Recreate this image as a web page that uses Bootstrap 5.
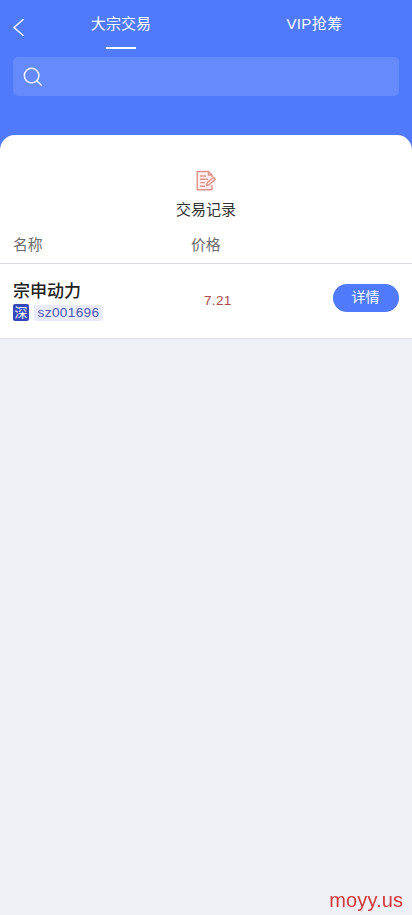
<!DOCTYPE html>
<html lang="zh-CN">
<head>
<meta charset="utf-8">
<meta name="viewport" content="width=device-width, initial-scale=1">
<title>大宗交易</title>
<link href="https://cdn.jsdelivr.net/npm/bootstrap@5.3.0/dist/css/bootstrap.min.css" rel="stylesheet">
<style>
body{font-family:"Liberation Sans","Noto Sans CJK SC",sans-serif;background:#eff1f6;font-size:15px;line-height:20px;color:#323233}
svg{display:block}
.hero{background:#507af9;height:150px}
.topbar{height:57px}
.back-btn{width:24px;padding:18px 0 0 12px}
.tab-item{color:#fff;padding-top:14px;height:49px;letter-spacing:.1px}
.tab-item.vip{letter-spacing:.4px;padding-right:1px}
.tab-line{width:30px;height:2px;background:#fff;margin-top:auto}
.search-box{height:39px;margin:0 13px;padding-left:10px;background:#658afb;border-radius:5px}
.panel{margin-top:-15px;border-radius:15px 15px 0 0;height:204px;border-bottom:1px solid #dcdde1}
.record{height:94px;padding-top:35px}
.record-title{margin-top:8px;font-size:15px;color:#323232}
.head-row{height:35px;padding:6px 13px 0;font-size:14.8px;color:#6b6b6b;border-bottom:1px solid #dcdde1}
.name-col{width:178px}
.stock-row{padding:17px 13px 0}
.stock-name{font-size:17px;line-height:22px;font-weight:500;color:#222}
.tags{gap:5px;padding-top:1px}
.market-tag{width:16px;height:17px;background:#3548ba;border-radius:2px;font-size:13px;line-height:17px}
.code-tag{height:16px;width:69px;background:#e9ebfc;color:#5058b0;border-radius:2px;font-size:13.6px;line-height:16px;letter-spacing:.35px}
.price{width:129px;padding:10px 0 0 13px;font-size:13.6px;line-height:20px;letter-spacing:.3px;color:#ad4b49}
.detail-btn{--bs-btn-color:#fff;--bs-btn-bg:#507af9;--bs-btn-hover-color:#fff;--bs-btn-hover-bg:#426ae8;width:66px;height:28px;margin-top:3px;padding:0 1px 2px 0;border:0;font-size:14px;line-height:26px}
.site-mark{right:9px;bottom:3px;font-size:20px;line-height:24px;letter-spacing:.1px;color:#d2383b}
</style>
<script src="https://cdn.jsdelivr.net/npm/bootstrap@5.3.0/dist/js/bootstrap.bundle.min.js" defer></script>
</head>
<body class="min-vh-100">
<header class="hero">
  <nav class="topbar d-flex" aria-label="交易">
    <a class="back-btn flex-shrink-0" href="#" aria-label="返回"><svg width="13" height="19" viewBox="0 0 13 19" fill="none" stroke="#fff" stroke-width="1.5"><path d="M11.5 1.2 2 9.5l9.5 8.3"/></svg></a>
    <a class="tab-item w-50 d-flex flex-column align-items-center text-decoration-none" href="#">大宗交易<span class="tab-line"></span></a>
    <a class="tab-item vip w-50 text-center text-decoration-none" href="#">VIP抢筹</a>
  </nav>
  <div class="search-box d-flex align-items-center">
    <svg width="20" height="20" viewBox="0 0 20 20" fill="none" stroke="#fff" stroke-width="1.4"><circle cx="8.6" cy="8.6" r="7.3"/><path d="m13.8 13.8 4.8 4.8"/></svg>
  </div>
</header>
<main class="panel position-relative bg-white">
  <div class="record d-flex flex-column align-items-center">
    <svg width="22" height="22" viewBox="0 0 22 22" fill="none" stroke="#e2918a" stroke-width="1.4" stroke-linejoin="round"><path fill="#fdf0ee" d="M17 7V5l-3.5-3.5H2.2v18.3H17V15"/><path d="M13.5 1.5V5H17M5 6h6M5 9.3h8M5 12.6h5M5 16.2h5"/><path fill="#fdf0ee" d="m11.5 15.8.8-3.2 6.2-5.3 1.8 2-6.2 5.4z"/></svg>
    <div class="record-title">交易记录</div>
  </div>
  <div class="head-row d-flex"><div class="name-col">名称</div><div>价格</div></div>
  <div class="stock-row d-flex">
    <div class="name-col">
      <div class="stock-name">宗申动力</div>
      <div class="tags d-flex align-items-center"><span class="market-tag text-white text-center overflow-hidden">深</span><span class="code-tag text-center">sz001696</span></div>
    </div>
    <div class="price">7.21</div>
    <button class="btn detail-btn rounded-pill ms-auto" type="button">详情</button>
  </div>
</main>
<div class="site-mark position-fixed">moyy.us</div>
</body>
</html>
